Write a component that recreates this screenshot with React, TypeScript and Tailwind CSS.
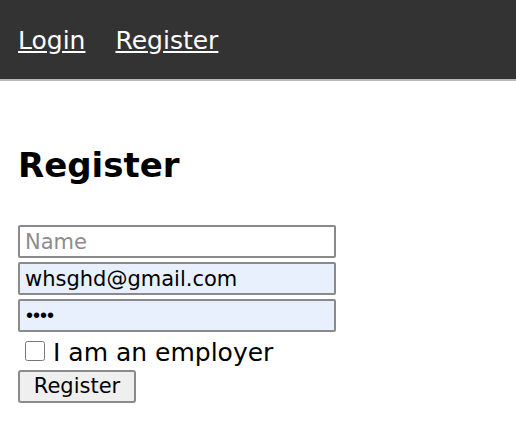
import React from 'react';

export default function App() {
  return (
    <div className="w-[516px] h-[444px] bg-white overflow-hidden" style={{ fontFamily: '"DejaVu Sans", Verdana, sans-serif' }}>
      <nav className="h-[81px] bg-[#333333] border-b-2 border-[#b8b8b8] flex items-center gap-[30px] px-[18px] pt-[1px]">
        <a href="#" className="text-white underline text-[25px] leading-none">Login</a>
        <a href="#" className="text-white underline text-[25px] leading-none">Register</a>
      </nav>

      <div className="px-[18px] pt-[67px]">
        <h1 className="text-[34px] font-bold text-black leading-none">Register</h1>

        <form className="mt-[43px] flex flex-col gap-[4px] w-[318px]">
          <input
            type="text"
            placeholder="Name"
            className="h-[33px] border-2 border-[#8a8a8a] rounded-[2px] px-[5px] text-[21px] placeholder:text-[#8c8c8c] outline-none"
          />
          <input
            type="email"
            defaultValue="whsghd@gmail.com"
            className="h-[33px] border-2 border-[#8a8a8a] rounded-[2px] px-[5px] text-[21px] bg-[#e8f0fe] outline-none"
          />
          {/* password dots render small and tight, like Arial bullets */}
          <input
            type="password"
            defaultValue="pass"
            className="h-[33px] border-2 border-[#8a8a8a] rounded-[2px] px-[6px] text-[20px] bg-[#e8f0fe] outline-none font-['Liberation_Sans',Arial,sans-serif]"
          />
          <label className="flex items-center text-[25px] text-black leading-none h-[30px] pt-[2px]">
            <input type="checkbox" className="w-[20px] h-[20px] ml-[7px] mr-[8px] -mt-[2px]" />
            I am an employer
          </label>
          <div>
            <button
              type="button"
              className="h-[33px] w-[118px] bg-[#efefef] border-2 border-[#8a8a8a] rounded-[3px] text-[21px] text-black leading-none"
            >
              Register
            </button>
          </div>
        </form>
      </div>
    </div>
  );
}
